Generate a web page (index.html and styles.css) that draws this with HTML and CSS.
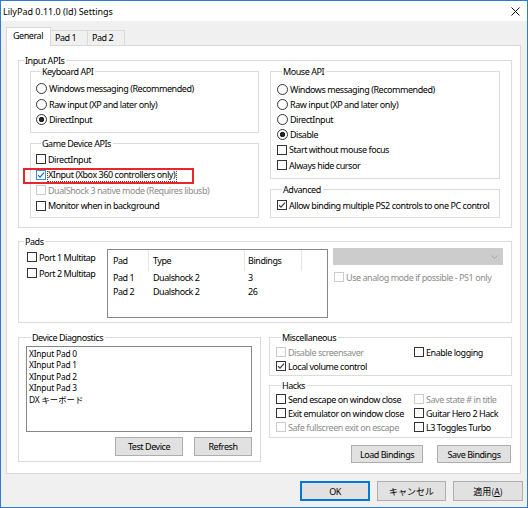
FILE: index.html
```html
<!DOCTYPE html>
<html lang="en">
<head>
<meta charset="utf-8">
<title>LilyPad Settings</title>
<link rel="stylesheet" href="styles.css">
</head>
<body>
<div class="window">
  <header class="titlebar">
    <span class="title">LilyPad 0.11.0 (ld) Settings</span>
    <svg class="close" width="9" height="9" viewBox="0 0 9 9"><path d="M0.5 0.5L8.5 8.5M8.5 0.5L0.5 8.5" stroke="#111" stroke-width="1" fill="none"/></svg>
  </header>
  <main class="body">
    <nav class="tabs">
      <div class="tab active">General</div>
      <div class="tab">Pad 1</div>
      <div class="tab">Pad 2</div>
    </nav>
    <section class="panel">
      <fieldset class="group g-input">
        <legend>Input APIs</legend>
        <div class="input-grid">
          <div class="col">
            <fieldset class="group g-kbd">
              <legend>Keyboard API</legend>
              <div class="opt"><span class="radio"></span>Windows messaging (Recommended)</div>
              <div class="opt"><span class="radio"></span>Raw input (XP and later only)</div>
              <div class="opt"><span class="radio on"></span>DirectInput</div>
            </fieldset>
            <fieldset class="group g-game">
              <legend>Game Device APIs</legend>
              <div class="opt"><span class="check"></span>DirectInput</div>
              <div class="opt"><span class="check hot"><svg viewBox="0 0 8 8" width="8" height="8"><path d="M1 4.2L3 6.2L7 1.6" fill="none" stroke="#245c9c" stroke-width="1.1"/></svg></span><span class="focus">XInput (Xbox 360 controllers only)</span><span class="annot"></span></div>
              <div class="opt disabled"><span class="check"></span>DualShock 3 native mode (Requires libusb)</div>
              <div class="opt"><span class="check"></span>Monitor when in background</div>
            </fieldset>
          </div>
          <div class="col">
            <fieldset class="group g-mouse">
              <legend>Mouse API</legend>
              <div class="opt"><span class="radio"></span>Windows messaging (Recommended)</div>
              <div class="opt"><span class="radio"></span>Raw input (XP and later only)</div>
              <div class="opt"><span class="radio"></span>DirectInput</div>
              <div class="opt"><span class="radio on"></span>Disable</div>
              <div class="opt"><span class="check"></span>Start without mouse focus</div>
              <div class="opt"><span class="check"></span>Always hide cursor</div>
            </fieldset>
            <fieldset class="group g-adv">
              <legend>Advanced</legend>
              <div class="opt"><span class="check"><svg viewBox="0 0 8 8" width="8" height="8"><path d="M1 4.2L3 6.2L7 1.6" fill="none" stroke="#333" stroke-width="1.1"/></svg></span>Allow binding multiple PS2 controls to one PC control</div>
            </fieldset>
          </div>
        </div>
      </fieldset>

      <fieldset class="group g-pads">
        <legend>Pads</legend>
        <div class="pads-row">
          <div class="pads-left">
            <div class="opt"><span class="check"></span>Port 1 Multitap</div>
            <div class="opt"><span class="check"></span>Port 2 Multitap</div>
          </div>
          <div class="listview">
            <div class="lv-head"><span class="c1">Pad</span><span class="c2">Type</span><span class="c3">Bindings</span></div>
            <div class="lv-row"><span class="c1">Pad 1</span><span class="c2">Dualshock 2</span><span class="c3">3</span></div>
            <div class="lv-row"><span class="c1">Pad 2</span><span class="c2">Dualshock 2</span><span class="c3">26</span></div>
          </div>
          <div class="pads-right">
            <div class="combo"><svg width="7" height="4" viewBox="0 0 7 4"><path d="M0.5 0.5L3.5 3.5L6.5 0.5" fill="none" stroke="#a3a3a3" stroke-width="1"/></svg></div>
            <div class="opt disabled"><span class="check"></span>Use analog mode if possible - PS1 only</div>
          </div>
        </div>
      </fieldset>

      <div class="bottom">
        <fieldset class="group g-diag">
          <legend>Device Diagnostics</legend>
          <div class="listbox">
            <div>XInput Pad 0</div>
            <div>XInput Pad 1</div>
            <div>XInput Pad 2</div>
            <div>XInput Pad 3</div>
            <div>DX <span class="ja">キーボード</span></div>
          </div>
          <div class="diag-buttons">
            <div class="btn b-test">Test Device</div>
            <div class="btn b-refresh">Refresh</div>
          </div>
        </fieldset>
        <div class="right-col">
          <fieldset class="group g-misc">
            <legend>Miscellaneous</legend>
            <div class="grid2">
              <div class="opt disabled"><span class="check"></span>Disable screensaver</div>
              <div class="opt"><span class="check"></span>Enable logging</div>
              <div class="opt"><span class="check"><svg viewBox="0 0 8 8" width="8" height="8"><path d="M1 4.2L3 6.2L7 1.6" fill="none" stroke="#333" stroke-width="1.1"/></svg></span>Local volume control</div>
            </div>
          </fieldset>
          <fieldset class="group g-hacks">
            <legend>Hacks</legend>
            <div class="grid2">
              <div class="opt"><span class="check"></span>Send escape on window close</div>
              <div class="opt disabled"><span class="check"></span>Save state # in title</div>
              <div class="opt"><span class="check"></span>Exit emulator on window close</div>
              <div class="opt"><span class="check"></span>Guitar Hero 2 Hack</div>
              <div class="opt disabled"><span class="check"></span>Safe fullscreen exit on escape</div>
              <div class="opt"><span class="check"></span>L3 Toggles Turbo</div>
            </div>
          </fieldset>
          <div class="bind-buttons">
            <div class="btn b-load">Load Bindings</div>
            <div class="btn b-save">Save Bindings</div>
          </div>
        </div>
      </div>
    </section>
    <div class="dlg-buttons">
      <div class="btn dlg default">OK</div>
      <div class="btn dlg cancel ja">キャンセル</div>
      <div class="btn dlg ja">適用(<u>A</u>)</div>
    </div>
  </main>
</div>
</body>
</html>
```

FILE: styles.css
```css
* { box-sizing: border-box; }
html, body { margin: 0; padding: 0; }
body {
  width: 528px;
  height: 508px;
  overflow: hidden;
  font-family: "Noto Sans", "Noto Sans CJK JP", sans-serif;
  font-size: 9px;
  letter-spacing: -0.45px;
  color: #000;
  background: #f0f0f0;
}
.ja { letter-spacing: 0; font-family: "Noto Sans CJK JP", "Noto Sans", sans-serif; }

.window {
  width: 528px;
  height: 508px;
  border: 1px solid #2b7dcf;
  background: #f0f0f0;
  display: flex;
  flex-direction: column;
}
.titlebar {
  flex: none;
  height: 20px;
  background: #fff;
  display: flex;
  align-items: center;
  justify-content: space-between;
  padding: 0 7px 0 2px;
}
.title { letter-spacing: 0; }
.close { display: block; margin-top: 1px; }

.body {
  flex: 1;
  display: flex;
  flex-direction: column;
  padding: 6px 4px 0 5px;
}

/* tabs */
.tabs { display: flex; align-items: flex-end; height: 18px; flex: none; }
.tab {
  width: 37px;
  height: 15px;
  border: 1px solid #d9d9d9;
  border-left: none;
  border-bottom: none;
  background: #f0f0f0;
  padding-left: 4px;
  line-height: 13px;
}
.tab.active {
  width: 45px;
  height: 19px;
  border-left: 1px solid #d9d9d9;
  background: #fff;
  margin-bottom: -1px;
  position: relative;
  z-index: 1;
  padding-left: 6px;
  line-height: 15px;
}

.panel {
  flex: none;
  width: 515px;
  height: 429px;
  background: #fff;
  border: 1px solid #d9d9d9;
  padding: 8px 0 0 11px;
  display: flex;
  flex-direction: column;
}

/* group boxes */
.group {
  margin: 0;
  padding: 0;
  border: 1px solid #dcdcdc;
  min-width: 0;
}
.group > legend {
  margin-left: 5px;
  padding: 0 2px 0 1px;
  height: 13px;
  line-height: 13px;
}

.g-input { width: 494px; height: 174px; flex: none; }
.input-grid {
  display: grid;
  grid-template-columns: 229px 230px;
  column-gap: 11px;
  padding: 0 11px;
  margin-top: -2px;
}
.col { display: flex; flex-direction: column; gap: 4px; }
.g-kbd { height: 68px; padding: 3px 0 0 5px; }
.g-game { height: 81px; padding: 1.5px 0 0 5px; }
.g-mouse { height: 114px; padding: 3.5px 0 0 6px; }
.g-adv { height: 35px; padding: 1.5px 0 0 6px; }
.g-kbd .opt, .g-game .opt { height: 15.5px; }
.g-mouse .opt, .g-adv .opt { height: 15.2px; }

/* options */
.opt {
  display: flex;
  align-items: center;
  white-space: nowrap;
  position: relative;
}
.opt.disabled { color: #8c8c8c; }
.radio {
  flex: none;
  width: 11px;
  height: 11px;
  border: 1px solid #333;
  border-radius: 50%;
  background: #fff;
  margin-right: 2px;
}
.radio.on { background: radial-gradient(circle, #222 0 2.4px, #fff 3px); }
.check {
  flex: none;
  width: 10px;
  height: 10px;
  border: 1px solid #333;
  background: #fff;
  margin-right: 2px;
  display: flex;
  align-items: center;
  justify-content: center;
}
.check svg { display: block; }
.disabled .check { border-color: #cccccc; }
.check.hot { border-color: #3a8ee0; margin-right: 1px; }
.focus {
  border: 1px dotted #444;
  padding: 0 1px 0 0;
  line-height: 12px;
}
.annot {
  position: absolute;
  left: -13px;
  top: 1px;
  width: 171px;
  height: 16px;
  border: 2px solid #e8262b;
  pointer-events: none;
}

/* pads */
.g-pads { width: 494px; height: 88px; margin-top: 7px; flex: none; }
.pads-row { display: flex; padding-left: 8px; }
.pads-left { width: 80px; padding-top: 1px; }
.pads-left .opt { height: 16px; }
.listview {
  width: 221px;
  height: 69px;
  margin-top: 1px;
  border: 1px solid #828790;
  background: #fff;
}
.lv-head, .lv-row { display: flex; }
.lv-head { height: 21px; }
.lv-head span { border-right: 1px solid #e5e5e5; line-height: 21px; }
.lv-row { height: 14px; line-height: 14px; }
.c1 { width: 41px; padding-left: 5px; }
.c2 { width: 96px; padding-left: 4px; }
.c3 { width: 57px; padding-left: 3px; }
.pads-right { width: 170px; margin-left: 5px; }
.combo {
  height: 17px;
  background: #cccccc;
  border: 1px solid #cccccc;
  display: flex;
  align-items: center;
  justify-content: flex-end;
  padding-right: 4px;
}
.combo svg { display: block; }
.pads-right .opt { height: 14px; margin-top: 5px; padding-left: 1px; }

/* bottom */
.bottom { display: flex; gap: 8px; margin-top: 8px; flex: none; }
.g-diag { width: 243px; height: 131px; padding: 0 8px 0 7px; }
.listbox {
  height: 86px;
  margin-top: 2px;
  border: 1px solid #828790;
  background: #fff;
  padding: 1px 2px;
  font-size: 8.4px;
  letter-spacing: -0.2px;
}
.listbox div { height: 11.4px; line-height: 11.4px; white-space: nowrap; }
.diag-buttons { display: flex; justify-content: flex-end; gap: 11px; margin-top: 5px; }
.right-col { width: 243px; display: flex; flex-direction: column; }
.g-misc { height: 45px; padding: 1px 0 0 6px; }
.g-hacks { height: 59px; margin-top: 3px; padding: 0 0 0 6px; }
.grid2 { display: grid; grid-template-columns: 138px auto; grid-auto-rows: 14px; }
.bind-buttons { display: flex; justify-content: flex-end; gap: 14px; margin-top: 7px; padding-right: 1px; }

/* buttons */
.btn {
  flex: none;
  border: 1px solid #adadad;
  background: #e1e1e1;
  display: flex;
  align-items: center;
  justify-content: center;
  white-space: nowrap;
}
.b-test { width: 68px; height: 19px; }
.b-refresh { width: 58px; height: 19px; }
.b-load { width: 72px; height: 18px; }
.b-save { width: 74px; height: 18px; }
.dlg-buttons { display: flex; justify-content: flex-end; gap: 7px; margin-top: 7px; }
.btn.dlg { width: 70px; height: 20px; }
.btn.cancel { width: 69px; }
.btn.default { border-color: #0078d7; box-shadow: inset 0 0 0 1px #0078d7; }
```
